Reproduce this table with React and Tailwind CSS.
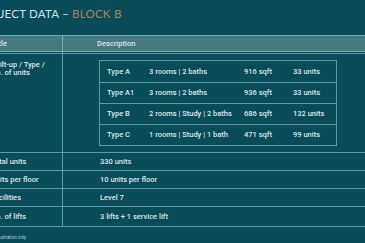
export default function App() {
  const types = [
    ["Type A", "3 rooms | 2 baths", "916 sqft", "33 units"],
    ["Type A1", "3 rooms | 2 baths", "936 sqft", "33 units"],
    ["Type B", "2 rooms | Study | 2 baths", "686 sqft", "132 units"],
    ["Type C", "1 rooms | Study | 1 bath", "471 sqft", "99 units"],
  ];
  const rows = [
    ["Total units", "330 units", "h-[18px]"],
    ["Units per floor", "10 units per floor", "h-[18px]"],
    ["Facilities", "Level 7", "h-[18px]"],
    ["No. of lifts", "3 lifts + 1 service lift", "h-[20px]"],
  ];
  const tbl = { fontFamily: "Roboto, 'DejaVu Sans', sans-serif" };
  return (
    <div className="w-[365px] h-[243px] overflow-hidden bg-[#084c57] flex flex-col">
      <div
        className="h-[35px] pt-[7px] text-[11.5px] leading-[13px] tracking-[0.02em] font-normal text-[#d3e0e1] whitespace-nowrap ml-[-24px]"
        style={{ fontFamily: "Lato, 'Open Sans', sans-serif" }}
      >
        PROJECT DATA – <span className="text-[#a9875a]">BLOCK B</span>
      </div>
      <div className="flex flex-col w-[380px] text-[7.5px] text-[#dbe7e8] font-medium" style={tbl}>
        <div className="flex h-[17px] border-y border-[#77aeb3] bg-[#44797e]">
          <div className="w-[63px] border-r border-[#77aeb3] flex items-center overflow-hidden">
            <span className="ml-[-8px]">Title</span>
          </div>
          <div className="flex-1 flex items-center pl-[34px]">Description</div>
        </div>
        <div className="flex h-[1px]">
          <div className="w-[63px] border-r border-[#77aeb3]" />
        </div>
        <div className="flex border-t border-[#5f9aa1]">
          <div className="w-[63px] border-r border-[#5f9aa1] pt-[7px] leading-[8px] overflow-hidden">
            <div className="ml-[-9px] whitespace-nowrap">Built-up / Type /</div>
            <div className="ml-[-9px] whitespace-nowrap">No. of units</div>
          </div>
          <div className="flex-1 pt-[6px] pb-[6px] pl-[36px]">
            <div className="w-[238px] border border-[#5f9aa1]">
              {types.map((t, i) => (
                <div
                  key={i}
                  className={`grid grid-cols-[42px_95px_49px_1fr] items-center pl-[7px] h-[21px] ${i > 0 ? "border-t border-[#5f9aa1]" : ""}`}
                >
                  <span>{t[0]}</span>
                  <span>{t[1]}</span>
                  <span>{t[2]}</span>
                  <span>{t[3]}</span>
                </div>
              ))}
            </div>
          </div>
        </div>
        {rows.map((r, i) => (
          <div key={i} className={`flex border-t border-[#5f9aa1] ${r[2]}`}>
            <div className="w-[63px] border-r border-[#5f9aa1] flex items-center overflow-hidden">
              <span className="ml-[-9px] whitespace-nowrap">{r[0]}</span>
            </div>
            <div className="flex-1 flex items-center pl-[37px]">{r[1]}</div>
          </div>
        ))}
        <div className="border-t border-[#5f9aa1]" />
      </div>
      <div className="mt-[8px] ml-[-12px] text-[4.5px] leading-[5px] text-[#b9cdcf] whitespace-nowrap" style={tbl}>
        For illustration only
      </div>
    </div>
  );
}
